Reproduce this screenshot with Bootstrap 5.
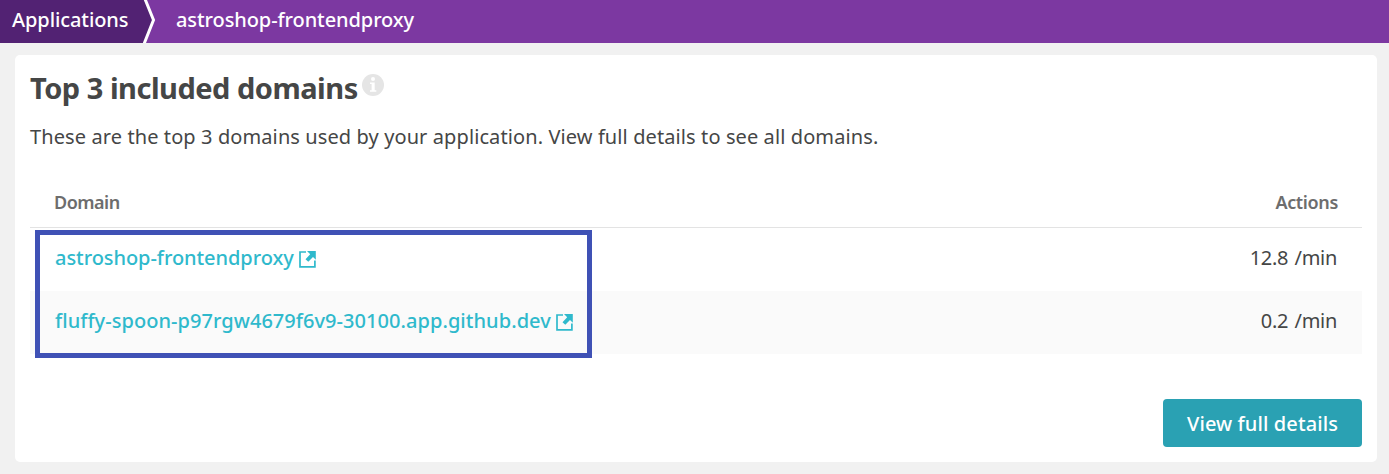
<!DOCTYPE html>
<html lang="en">
<head>
<meta charset="utf-8">
<title>Top included domains</title>
<meta name="viewport" content="width=device-width, initial-scale=1">
<link href="https://cdn.jsdelivr.net/npm/bootstrap@5.3.0/dist/css/bootstrap.min.css" rel="stylesheet">
<style>
body{background:#f1f1f1;font-family:"Noto Sans","Open Sans",sans-serif;font-size:20px;line-height:30px;color:#454646;height:474px;overflow:hidden}
.crumbs{height:43px;background:#7c38a1;color:#fff;font-weight:500;line-height:40px;letter-spacing:-.09px}
.crumbs a{color:inherit;text-decoration:none}
.crumbs svg{flex:none}
.crumb-root{background:#522273;width:143px;padding-left:12px;white-space:nowrap}
.crumb-page{padding-left:20px}
.panel{margin:12px 12px 0 15px;height:407px;border-radius:5px;background:#fff;padding:15px 15px 15px}
.panel h1{font-size:29px;line-height:36px;font-weight:700;letter-spacing:-.49px}
.info-icon{margin:4px 0 0 4px}
.intro{margin:16px 0 37px;letter-spacing:.1px}
.domains th{font-size:18px;line-height:26px;font-weight:600;color:#6d6d6d;padding:0 24px 12px;border-bottom:1px solid #e3e3e3;letter-spacing:-.5px}
.domains th.text-end{letter-spacing:-.35px}
.domains td{height:63px;padding:0 25px 2px;border:0;vertical-align:middle}
.domains td.text-end{letter-spacing:-.3px;word-spacing:1.5px}
.domains tbody tr:nth-child(2) td{background:#fafafa}
.domains a{color:#2fb9cc;text-decoration:none;font-weight:500}
.domains a svg{margin-left:5px;vertical-align:-3px}
.name-short{letter-spacing:-.06px}
.name-long{letter-spacing:.05px}
.highlight{left:5px;top:41px;width:557px;height:128px;border:5px solid #3f51b5;pointer-events:none}
.btn-details{background:#2aa1b3;color:#fff;font-size:20px;font-weight:500;letter-spacing:.1px;width:199px;height:48px;border-radius:4px;padding:2px 0 0;border:0}
</style>
</head>
<body>
<svg class="d-none">
<symbol id="external" viewBox="0 0 17 17"><path d="M7 1H1V15.900H15.900V9.500" fill="none" stroke="currentColor" stroke-width="1.700"/><path d="M8 0H16.800V8.800L14 6L9.300 10.700L6.500 8.200L11.200 3.300Z" fill="currentColor"/></symbol>
</svg>
<nav class="crumbs d-flex">
<div class="crumb-root"><a href="#">Applications</a></div>
<svg width="13" height="43"><path d="M0 0H2L10.500 20L1 43H0Z" fill="#522273"/><path d="M2 -1L10.500 20L1 44" fill="none" stroke="#fff" stroke-width="3"/></svg>
<div class="crumb-page">astroshop-frontendproxy</div>
</nav>
<main class="panel d-flex flex-column">
<div class="d-flex"><h1 class="m-0">Top 3 included domains</h1>
<svg class="info-icon" width="22" height="22" viewBox="0 0 22 22"><circle cx="11" cy="11" r="11" fill="#e5e5e5"/><circle cx="11" cy="5" r="2" fill="#fff"/><path d="M8 8.500H12.700V16.200H14.300V17.700H8V16.200H9.600V10H8Z" fill="#fff"/></svg></div>
<p class="intro">These are the top 3 domains used by your application. View full details to see all domains.</p>
<div class="position-relative">
<table class="domains w-100">
<thead><tr><th>Domain</th><th class="text-end">Actions</th></tr></thead>
<tbody><tr><td><a href="#"><span class="name-short">astroshop-frontendproxy</span><svg width="17" height="17"><use href="#external"/></svg></a></td><td class="text-end">12.8 /min</td></tr>
<tr><td><a href="#"><span class="name-long">fluffy-spoon-p97rgw4679f6v9-30100.app.github.dev</span><svg width="17" height="17"><use href="#external"/></svg></a></td><td class="text-end">0.2 /min</td></tr></tbody>
</table>
<div class="highlight position-absolute"></div>
</div>
<button class="btn btn-details align-self-end mt-auto">View full details</button>
</main>
<script src="https://cdn.jsdelivr.net/npm/bootstrap@5.3.0/dist/js/bootstrap.bundle.min.js"></script>
</body>
</html>
